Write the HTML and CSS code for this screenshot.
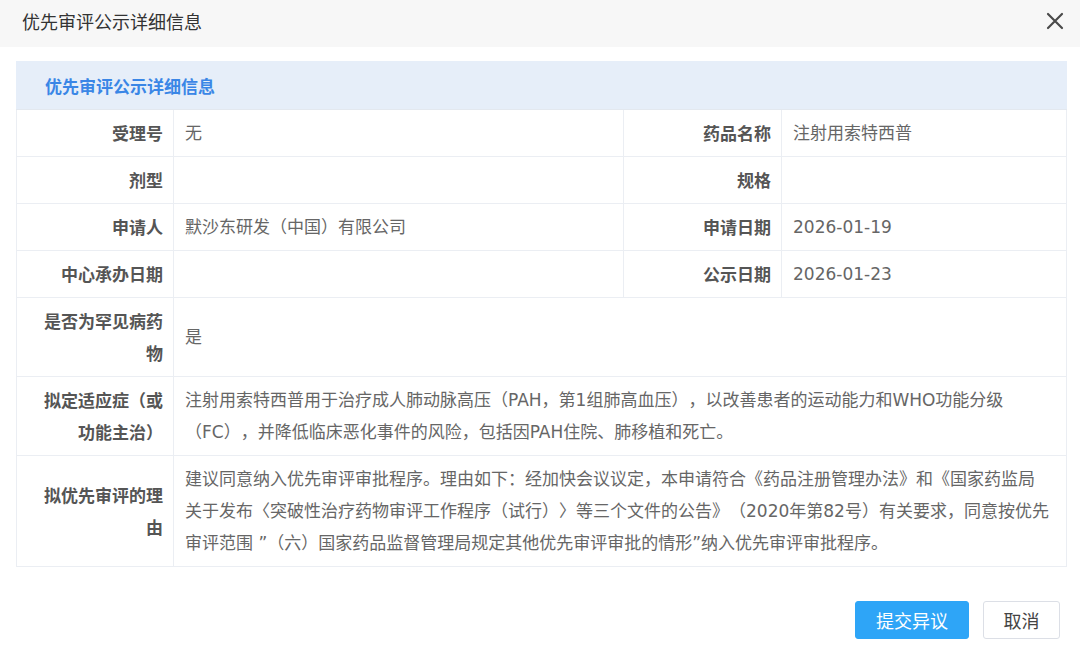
FILE: index.html
```html
<!DOCTYPE html>
<html lang="zh-CN">
<head>
<meta charset="utf-8">
<title>优先审评公示详细信息</title>
<link rel="stylesheet" href="styles.css">
</head>
<body>
<div class="dialog">
  <div class="dialog-header">
    <span class="dialog-title">优先审评公示详细信息</span>
    <button class="close-btn" aria-label="关闭">
      <svg width="18" height="18" viewBox="0 0 18 18"><path d="M2 2 L16 16 M16 2 L2 16" stroke="#4a4a4a" stroke-width="2.2" stroke-linecap="round" fill="none"/></svg>
    </button>
  </div>
  <div class="dialog-body">
    <table class="info-table">
      <colgroup>
        <col class="c-label"><col class="c-value"><col class="c-label2"><col class="c-value2">
      </colgroup>
      <thead>
        <tr><th colspan="4" class="table-caption">优先审评公示详细信息</th></tr>
      </thead>
      <tbody>
        <tr><td class="label">受理号</td><td class="value">无</td><td class="label">药品名称</td><td class="value">注射用索特西普</td></tr>
        <tr><td class="label">剂型</td><td class="value"></td><td class="label">规格</td><td class="value"></td></tr>
        <tr><td class="label">申请人</td><td class="value">默沙东研发（中国）有限公司</td><td class="label">申请日期</td><td class="value">2026-01-19</td></tr>
        <tr><td class="label">中心承办日期</td><td class="value"></td><td class="label">公示日期</td><td class="value">2026-01-23</td></tr>
        <tr><td class="label">是否为罕见病药物</td><td class="value wide" colspan="3">是</td></tr>
        <tr><td class="label">拟定适应症（或功能主治）</td><td class="value wide" colspan="3">注射用索特西普用于治疗成人肺动脉高压（PAH，第1组肺高血压），以改善患者的运动能力和WHO功能分级（FC），并降低临床恶化事件的风险，包括因PAH住院、肺移植和死亡。</td></tr>
        <tr><td class="label">拟优先审评的理由</td><td class="value wide" colspan="3">建议同意纳入优先审评审批程序。理由如下：经加快会议议定，本申请符合《药品注册管理办法》和《国家药监局关于发布〈突破性治疗药物审评工作程序（试行）〉等三个文件的公告》（2020年第82号）有关要求，同意按优先审评范围 ”（六）国家药品监督管理局规定其他优先审评审批的情形”纳入优先审评审批程序。</td></tr>
      </tbody>
    </table>
  </div>
  <div class="dialog-footer">
    <button class="btn btn-primary">提交异议</button>
    <button class="btn btn-default">取消</button>
  </div>
</div>
</body>
</html>
```

FILE: styles.css
```css
html, body {
  margin: 0;
  padding: 0;
  background: #ffffff;
  font-family: "Microsoft YaHei", "Noto Sans CJK SC", "Noto Sans", sans-serif;
  text-spacing-trim: space-all;
}

.dialog {
  width: 1080px;
  height: 651px;
  display: flex;
  flex-direction: column;
}

.dialog-header {
  height: 47px;
  background: #f7f7f7;
  display: flex;
  align-items: center;
  justify-content: space-between;
  padding: 0 16px 0 22px;
}

.dialog-title {
  font-size: 18px;
  color: #333333;
  line-height: 1;
  margin-top: -6px;
}

.close-btn {
  border: none;
  background: transparent;
  padding: 0;
  width: 18px;
  height: 18px;
  display: flex;
  margin-top: -5px;
}

.dialog-body {
  padding: 14px 14px 0 16px;
}

.info-table {
  width: 1050px;
  border-collapse: collapse;
  table-layout: fixed;
  font-size: 17px;
}

.c-label { width: 157px; }
.c-value { width: 450px; }
.c-label2 { width: 158px; }
.c-value2 { width: 285px; }

.table-caption {
  height: 47px;
  background: #e6eef9;
  color: #3a86e6;
  font-weight: bold;
  font-size: 17px;
  text-align: left;
  padding: 0 0 0 28px;
  border: 1px solid #e6eef9;
  border-bottom: 1px solid #e3e8ef;
}

.info-table td {
  border: 1px solid #ebeef3;
  line-height: 32px;
  padding: 7px 12px;
  vertical-align: middle;
}

.info-table td.label {
  text-align: right;
  font-weight: bold;
  color: #555555;
  padding-right: 10px;
  padding-left: 20px;
}

.info-table td.value {
  color: #666666;
  padding-left: 11px;
  font-family: "DejaVu Sans", "Noto Sans CJK SC", sans-serif;
}

.info-table td.value.wide {
  padding-right: 15px;
}

.dialog-footer {
  display: flex;
  justify-content: flex-end;
  gap: 14px;
  padding: 34px 20px 0 0;
}

.btn {
  height: 38px;
  font-size: 18px;
  font-family: inherit;
  border-radius: 3px;
  cursor: pointer;
}

.btn-primary {
  width: 114px;
  background: #2ea5f7;
  color: #ffffff;
  border: 1px solid #2ea5f7;
}

.btn-default {
  width: 77px;
  background: #ffffff;
  color: #444444;
  border: 1px solid #dcdfe6;
}
```
